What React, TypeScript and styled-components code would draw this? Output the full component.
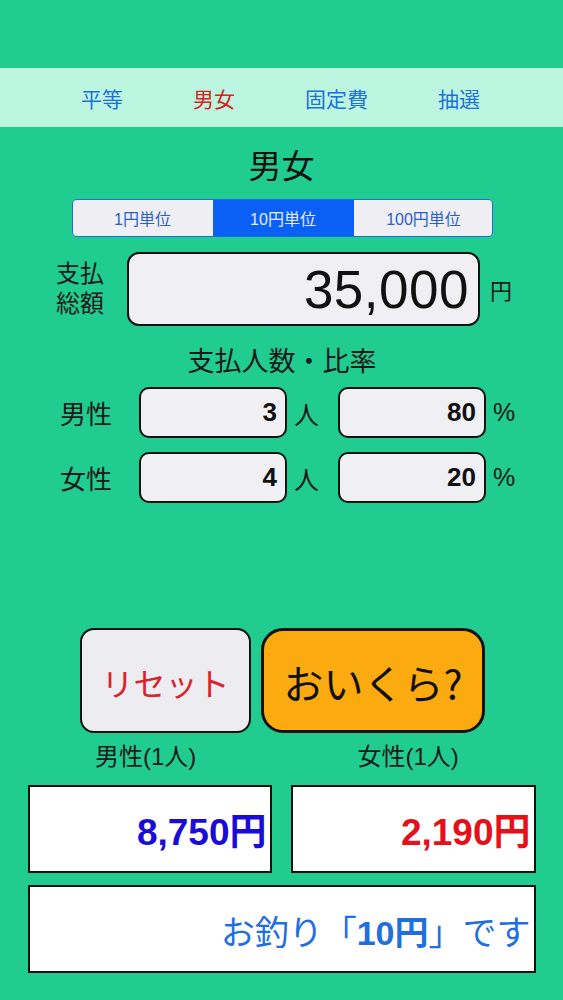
import styled, { createGlobalStyle } from 'styled-components';

const GlobalStyle = createGlobalStyle`
  html, body {
    margin: 0;
    padding: 0;
    background: #21cc90;
  }
  * {
    box-sizing: border-box;
  }
`;

const Page = styled.div`
  width: 563px;
  height: 1000px;
  background: #21cc90;
  font-family: 'Liberation Sans', 'Noto Sans CJK JP', sans-serif;
  color: #111;
  padding-top: 68px;
  display: flex;
  flex-direction: column;
  align-items: center;
  overflow: hidden;
`;

const TabBar = styled.nav`
  width: 100%;
  height: 59px;
  background: #bdf6e0;
  display: flex;
  justify-content: center;
  align-items: center;
  gap: 70px;
  padding-right: 2px;
`;

const Tab = styled.span<{ $active?: boolean }>`
  font-family: 'Noto Sans CJK JP', sans-serif;
  font-size: 21px;
  line-height: 24px;
  color: ${(p) => (p.$active ? '#d8231f' : '#1f6fd8')};
`;

const Title = styled.h1`
  margin: 17px 0 0;
  font-family: 'Noto Sans CJK JP', sans-serif;
  font-weight: 400;
  font-size: 33px;
  line-height: 40px;
  color: #111;
`;

const Segment = styled.div`
  margin-top: 15px;
  width: 421px;
  height: 38px;
  margin-left: 1px;
  display: grid;
  grid-template-columns: 140px 141px 140px;
  border: 1.5px solid #1a6fe0;
  border-radius: 5px;
  overflow: hidden;
`;

const SegItem = styled.div<{ $selected?: boolean }>`
  display: flex;
  align-items: center;
  justify-content: center;
  font-size: 16px;
  background: ${(p) => (p.$selected ? '#0a5ff5' : '#eeeef3')};
  color: ${(p) => (p.$selected ? '#e6ecff' : '#2a5fc8')};
`;

const TotalRow = styled.div`
  margin-top: 15px;
  width: 100%;
  display: flex;
  align-items: center;
  padding-left: 56px;
`;

const StackLabel = styled.div`
  width: 52px;
  font-size: 24px;
  line-height: 30px;
  color: #1a1a1a;
  margin-right: 19px;
`;

const TotalBox = styled.div`
  width: 353px;
  height: 74px;
  border: 2px solid #111;
  border-radius: 12px;
  background: #efeff4;
  display: flex;
  align-items: center;
  justify-content: flex-end;
  padding-right: 9px;
  font-size: 53px;
  letter-spacing: 0.5px;
  color: #111;
`;

const Unit = styled.span<{ $size?: number }>`
  font-size: ${(p) => p.$size ?? 22}px;
  color: #1a1a1a;
  margin-left: 10px;
`;

const SubHeading = styled.div`
  margin-top: 20px;
  font-size: 27px;
  line-height: 32px;
  color: #1a1a1a;
  margin-left: 1px;
`;

const PeopleGrid = styled.div`
  margin-top: 9px;
  width: 100%;
  padding-left: 60px;
  display: grid;
  grid-template-columns: 79px 148px 51px 148px auto;
  grid-auto-rows: 51px;
  row-gap: 14px;
  align-items: center;
`;

const RowLabel = styled.div`
  font-size: 26px;
  color: #1a1a1a;
`;

const SmallBox = styled.div`
  height: 51px;
  border: 2px solid #111;
  border-radius: 10px;
  background: #efeff4;
  display: flex;
  align-items: center;
  justify-content: flex-end;
  padding-right: 8px;
  font-size: 26px;
  font-weight: 700;
  color: #111;
`;

const Suffix = styled.div`
  font-size: 25px;
  color: #1a1a1a;
  padding-left: 7px;
`;

const ButtonRow = styled.div`
  margin-top: 125px;
  display: flex;
  gap: 10px;
  margin-left: 2px;
`;

const Button = styled.div<{ $primary?: boolean }>`
  height: 105px;
  width: ${(p) => (p.$primary ? 224 : 171)}px;
  border: ${(p) => (p.$primary ? 3 : 2)}px solid #111;
  border-radius: ${(p) => (p.$primary ? 22 : 14)}px;
  background: ${(p) => (p.$primary ? '#fbaa10' : '#ececf1')};
  color: ${(p) => (p.$primary ? '#111' : '#d8232a')};
  font-family: 'Noto Sans CJK JP', sans-serif;
  font-size: ${(p) => (p.$primary ? 40 : 32)}px;
  display: flex;
  align-items: center;
  justify-content: center;
  padding-top: 2px;
`;

const ResultLabels = styled.div`
  margin-top: 10px;
  width: 100%;
  display: grid;
  grid-template-columns: 1fr 1fr;
  font-size: 24px;
  line-height: 28px;
  color: #1a1a1a;
`;

const ResultLabel = styled.div<{ $offset: number }>`
  padding-left: ${(p) => p.$offset}px;
`;

const Results = styled.div`
  margin-top: 14px;
  width: 508px;
  display: grid;
  grid-template-columns: 244px 245px;
  column-gap: 19px;
  row-gap: 12px;
`;

const ResultBox = styled.div<{ $color: string; $wide?: boolean }>`
  grid-column: ${(p) => (p.$wide ? '1 / -1' : 'auto')};
  height: 88px;
  border: 2px solid #111;
  background: #fff;
  display: flex;
  align-items: center;
  justify-content: flex-end;
  padding-right: 3px;
  color: ${(p) => p.$color};
  font-size: ${(p) => (p.$wide ? 34 : 37)}px;
  font-weight: ${(p) => (p.$wide ? 400 : 700)};
  padding-top: ${(p) => (p.$wide ? 2 : 0)}px;
`;

const Strong = styled.b`
  font-weight: 700;
`;

export default function App() {
  return (
    <Page>
      <GlobalStyle />
      <TabBar>
        <Tab>平等</Tab>
        <Tab $active>男女</Tab>
        <Tab>固定費</Tab>
        <Tab>抽選</Tab>
      </TabBar>

      <Title>男女</Title>

      <Segment>
        <SegItem>1円単位</SegItem>
        <SegItem $selected>10円単位</SegItem>
        <SegItem>100円単位</SegItem>
      </Segment>

      <TotalRow>
        <StackLabel>
          支払
          <br />
          総額
        </StackLabel>
        <TotalBox>35,000</TotalBox>
        <Unit>円</Unit>
      </TotalRow>

      <SubHeading>支払人数・比率</SubHeading>

      <PeopleGrid>
        <RowLabel>男性</RowLabel>
        <SmallBox>3</SmallBox>
        <Suffix>人</Suffix>
        <SmallBox>80</SmallBox>
        <Suffix>%</Suffix>

        <RowLabel>女性</RowLabel>
        <SmallBox>4</SmallBox>
        <Suffix>人</Suffix>
        <SmallBox>20</SmallBox>
        <Suffix>%</Suffix>
      </PeopleGrid>

      <ButtonRow>
        <Button>リセット</Button>
        <Button $primary>おいくら?</Button>
      </ButtonRow>

      <ResultLabels>
        <ResultLabel $offset={95}>男性(1人)</ResultLabel>
        <ResultLabel $offset={76}>女性(1人)</ResultLabel>
      </ResultLabels>

      <Results>
        <ResultBox $color="#1a0bd6">8,750円</ResultBox>
        <ResultBox $color="#e5101a">2,190円</ResultBox>
        <ResultBox $color="#1f6fdf" $wide>
          お釣り「<Strong>10円</Strong>」です
        </ResultBox>
      </Results>
    </Page>
  );
}
